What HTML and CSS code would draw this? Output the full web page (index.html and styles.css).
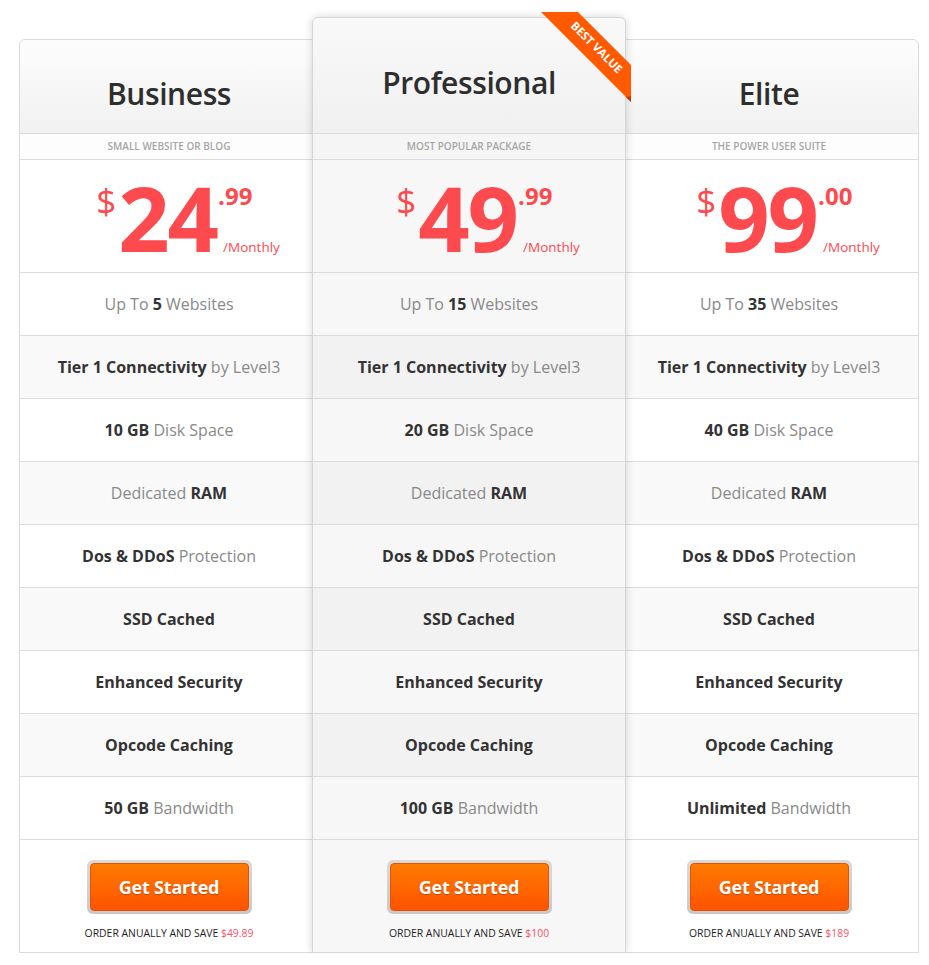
FILE: index.html
```html
<!DOCTYPE html>
<html lang="en">
<head>
<meta charset="utf-8">
<title>Pricing</title>
<link rel="stylesheet" href="styles.css">
</head>
<body>
<div class="pricing">
  <div class="plan">
    <div class="head"><h2>Business</h2></div>
    <div class="sub">Small website or blog</div>
    <div class="price"><span class="cur">$</span><span class="amt">24</span><span class="side"><span class="cents">.99</span><span class="per">/Monthly</span></span></div>
    <ul class="features">
      <li>Up To <b>5</b> Websites</li>
      <li><b>Tier 1 Connectivity</b> by Level3</li>
      <li><b>10 GB</b> Disk Space</li>
      <li>Dedicated <b>RAM</b></li>
      <li><b>Dos &amp; DDoS</b> Protection</li>
      <li><b>SSD Cached</b></li>
      <li><b>Enhanced Security</b></li>
      <li><b>Opcode Caching</b></li>
      <li><b>50 GB</b> Bandwidth</li>
    </ul>
    <div class="foot"><a class="btn" href="#"><span>Get Started</span></a><p>Order anually and save <em>$49.89</em></p></div>
  </div>
  <div class="plan featured">
    <svg class="ribbon" width="100" height="100" viewBox="0 0 100 100">
      <polygon points="5,4 42,4 95,57 95,94" fill="#ff5a00"/>
      <polygon points="89.5,88.5 95,88.5 95,94" fill="#b83d00"/>
      <text x="60" y="40" transform="rotate(45 60 40)" text-anchor="middle" dominant-baseline="middle" class="ribbon-text">BEST VALUE</text>
    </svg>
    <div class="head"><h2>Professional</h2></div>
    <div class="sub">Most popular package</div>
    <div class="price"><span class="cur">$</span><span class="amt">49</span><span class="side"><span class="cents">.99</span><span class="per">/Monthly</span></span></div>
    <ul class="features">
      <li>Up To <b>15</b> Websites</li>
      <li><b>Tier 1 Connectivity</b> by Level3</li>
      <li><b>20 GB</b> Disk Space</li>
      <li>Dedicated <b>RAM</b></li>
      <li><b>Dos &amp; DDoS</b> Protection</li>
      <li><b>SSD Cached</b></li>
      <li><b>Enhanced Security</b></li>
      <li><b>Opcode Caching</b></li>
      <li><b>100 GB</b> Bandwidth</li>
    </ul>
    <div class="foot"><a class="btn" href="#"><span>Get Started</span></a><p>Order anually and save <em>$100</em></p></div>
  </div>
  <div class="plan">
    <div class="head"><h2>Elite</h2></div>
    <div class="sub">The power user suite</div>
    <div class="price"><span class="cur">$</span><span class="amt">99</span><span class="side"><span class="cents">.00</span><span class="per">/Monthly</span></span></div>
    <ul class="features">
      <li>Up To <b>35</b> Websites</li>
      <li><b>Tier 1 Connectivity</b> by Level3</li>
      <li><b>40 GB</b> Disk Space</li>
      <li>Dedicated <b>RAM</b></li>
      <li><b>Dos &amp; DDoS</b> Protection</li>
      <li><b>SSD Cached</b></li>
      <li><b>Enhanced Security</b></li>
      <li><b>Opcode Caching</b></li>
      <li><b>Unlimited</b> Bandwidth</li>
    </ul>
    <div class="foot"><a class="btn" href="#"><span>Get Started</span></a><p>Order anually and save <em>$189</em></p></div>
  </div>
</div>
</body>
</html>
```

FILE: styles.css
```css
* { box-sizing: border-box; }
html, body { margin: 0; padding: 0; background: #fff; }
body { font-family: "Open Sans", "Liberation Sans", sans-serif; color: #333; }

.pricing {
  display: grid;
  grid-template-columns: 300px 300px 300px;
  align-items: end;
  margin: 17px 0 0 19px;
  width: 900px;
}

.plan {
  position: relative;
  border: 1px solid #dcdcdc;
  border-radius: 6px 6px 0 0;
  background: #fff;
}

.plan.featured {
  margin: 0 -7px;
  z-index: 2;
  background: #f7f7f7;
  border-color: #d6d6d6;
  box-shadow: 0 0 9px rgba(0, 0, 0, 0.16);
}

.head {
  height: 94px;
  padding-top: 14px;
  display: flex;
  align-items: center;
  justify-content: center;
  border-bottom: 1px solid #dcdcdc;
  border-radius: 6px 6px 0 0;
  background: linear-gradient(#fdfdfd, #f1f1f1);
}
.featured .head { height: 116px; background: linear-gradient(#f9f9f9, #f0f0f0); }

.head h2 {
  margin: 0;
  font-size: 30px;
  font-weight: 600;
  color: #2e2e2e;
  letter-spacing: -0.4px;
  line-height: 1;
}

.sub {
  height: 26px;
  border-bottom: 1px solid #dcdcdc;
  font-size: 10px;
  font-weight: 600;
  text-transform: uppercase;
  color: #a6a6a6;
  text-align: center;
  line-height: 25px;
  background: #fdfdfd;
}
.featured .sub { background: #f5f5f5; }

.price {
  height: 113px;
  border-bottom: 1px solid #dcdcdc;
  display: flex;
  justify-content: center;
  align-items: flex-start;
  padding: 12px 0 0 38px;
  color: #fd4a4e;
  line-height: 1;
}
.cur { font-size: 35px; margin-top: 11px; margin-right: 2px; }
.amt { font-size: 90px; font-weight: 700; letter-spacing: -2px; height: 90px; }
.side {
  display: flex;
  flex-direction: column;
  justify-content: space-between;
  align-self: stretch;
  height: 90px;
  padding: 12px 0 8px 1px;
}
.cents { font-size: 24px; font-weight: 700; }
.per { font-size: 13.5px; margin-left: 5px; }

.features { list-style: none; margin: 0; padding: 0; }
.features li {
  height: 63px;
  border-bottom: 1px solid #dcdcdc;
  display: flex;
  align-items: center;
  justify-content: center;
  font-size: 16px;
  color: #898989;
  white-space: pre;
}
.features li:nth-child(even) { background: #f9f9f9; }
.featured .features li:nth-child(even) { background: #f2f2f2; }
.features b { color: #333; font-weight: 700; }

.foot {
  height: 112px;
  padding-top: 20px;
  text-align: center;
}
.btn {
  display: inline-block;
  width: 165px;
  height: 54px;
  padding: 3px;
  border-radius: 6px;
  background: linear-gradient(#dadada, #c8c8c8);
  text-decoration: none;
}
.btn span {
  display: block;
  height: 100%;
  border: 1px solid #e45400;
  border-radius: 4px;
  background: linear-gradient(#ff7b00, #ff5300);
  color: #fff;
  font-size: 18px;
  font-weight: 700;
  line-height: 46px;
  letter-spacing: -0.2px;
  text-shadow: 0 1px 1px rgba(0, 0, 0, 0.25);
}
.foot p {
  margin: 12px 0 0;
  font-size: 10.4px;
  line-height: 14px;
  text-transform: uppercase;
  color: #1e1e1e;
}
.foot em { font-style: normal; color: #ff5067; }

.ribbon {
  position: absolute;
  left: 223px;
  top: -10px;
  overflow: visible;
}
.ribbon-text {
  font-family: "Open Sans", sans-serif;
  font-size: 11.5px;
  font-weight: 700;
  fill: #fff;
}
```
